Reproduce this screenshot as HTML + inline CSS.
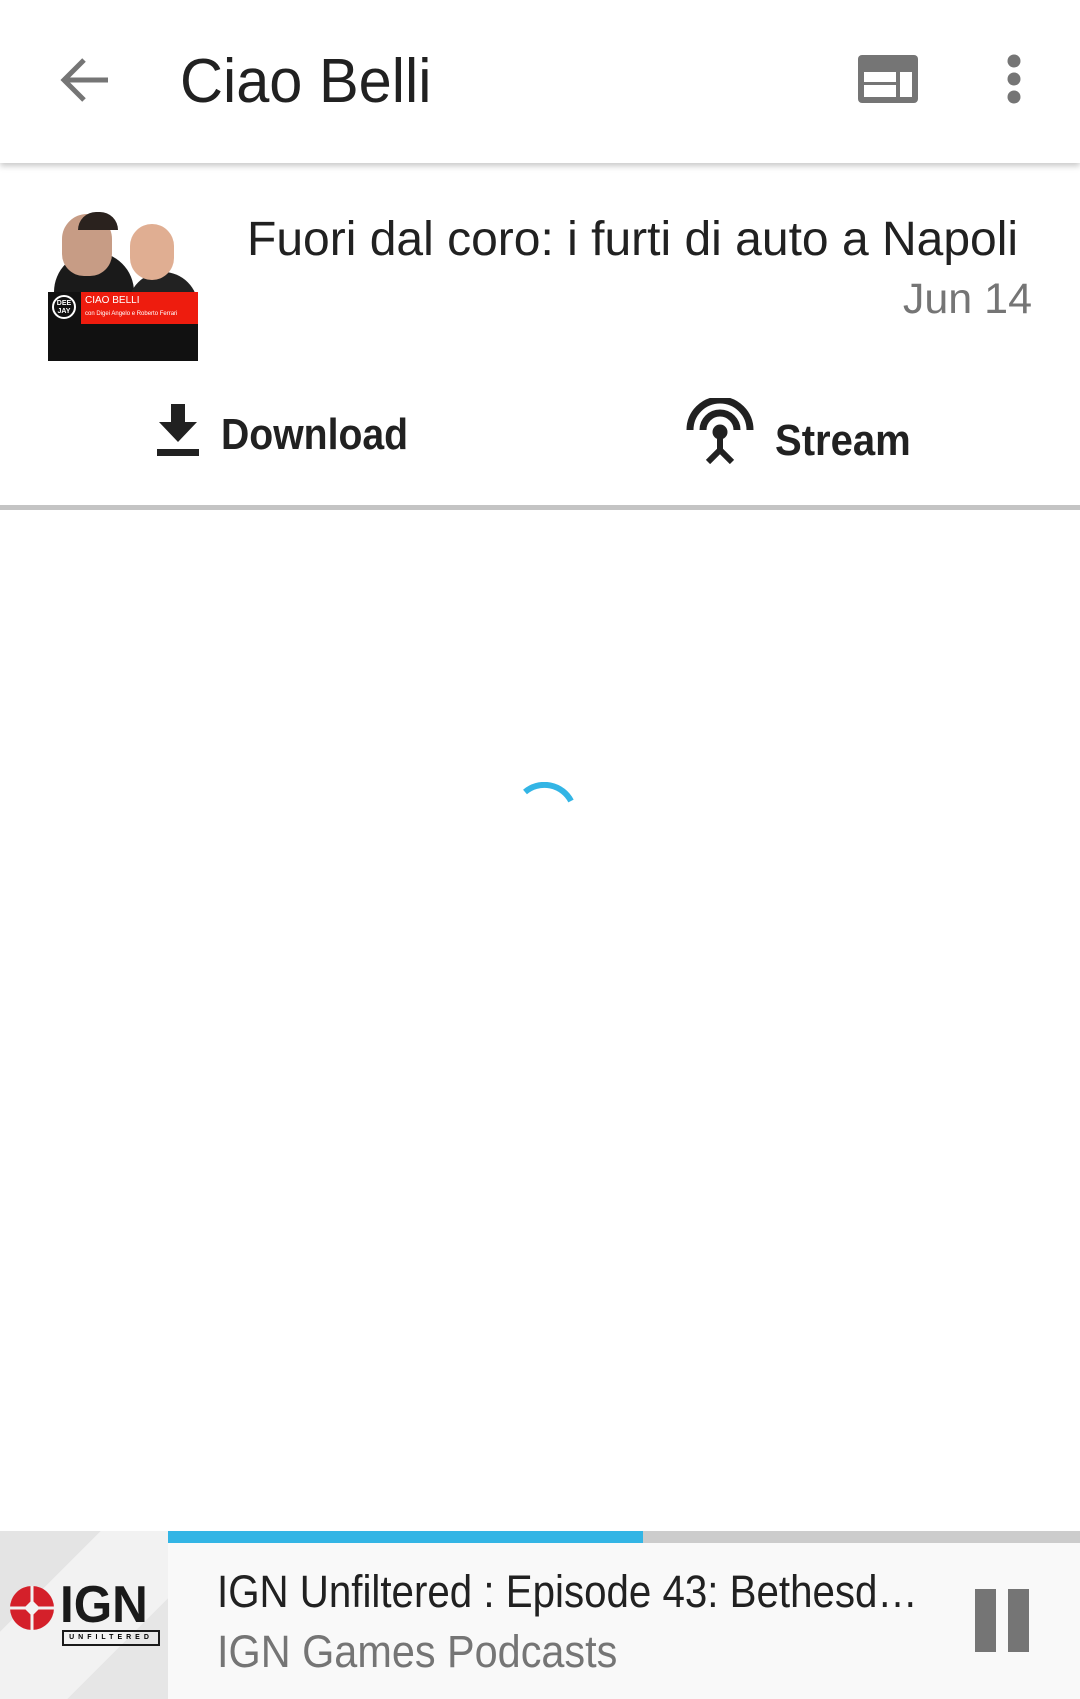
<!DOCTYPE html>
<html><head><meta charset="utf-8"><style>
*{margin:0;padding:0;box-sizing:border-box}
body{width:1080px;height:1699px;background:#fff;font-family:"Liberation Sans",Roboto,sans-serif;position:relative;overflow:hidden}
.abs{position:absolute}
.sx{transform-origin:0 0;white-space:nowrap}
#hdr{left:0;top:0;width:1080px;height:163px;background:#fff;box-shadow:0 3px 6px rgba(0,0,0,.22);z-index:2}
</style></head><body>
<div id="hdr" class="abs">
 <svg class="abs" style="left:56px;top:56px" width="56" height="48" viewBox="0 0 56 48"><path d="M52 24H8M28 4L8 24l20 20" stroke="#757575" stroke-width="5" fill="none"/></svg>
 <div class="abs sx" style="left:180px;top:46px;font-size:62px;color:#212121;transform:scaleX(0.96)">Ciao Belli</div>
 <svg class="abs" style="left:858px;top:55px" width="60" height="48" viewBox="0 0 60 48"><rect x="0" y="0" width="60" height="48" rx="4" fill="#757575"/><rect x="6" y="17" width="32" height="10" fill="#fff"/><rect x="6" y="30" width="32" height="12" fill="#fff"/><rect x="42" y="17" width="12" height="25" fill="#fff"/></svg>
 <svg class="abs" style="left:1004px;top:53px" width="20" height="52" viewBox="0 0 20 52"><circle cx="10" cy="8" r="6.5" fill="#757575"/><circle cx="10" cy="26" r="6.5" fill="#757575"/><circle cx="10" cy="44" r="6.5" fill="#757575"/></svg>
</div>
<div class="abs" style="left:48px;top:212px;width:150px;height:149px;background:#fff;overflow:hidden">
 <div class="abs" style="left:6px;top:40px;width:80px;height:80px;border-radius:40px 40px 0 0;background:#1a1a1a"></div>
 <div class="abs" style="left:80px;top:60px;width:70px;height:70px;border-radius:35px 35px 0 0;background:#222"></div>
 <div class="abs" style="left:14px;top:2px;width:50px;height:62px;border-radius:25px 25px 22px 22px;background:#c79c85"></div>
 <div class="abs" style="left:30px;top:0px;width:40px;height:18px;border-radius:20px 20px 0 0;background:#2a221e"></div>
 <div class="abs" style="left:82px;top:12px;width:44px;height:56px;border-radius:22px;background:#e0ae92"></div>
 <div class="abs" style="left:0;top:80px;width:150px;height:69px;background:#111"></div>
 <div class="abs" style="left:33px;top:80px;width:117px;height:32px;background:#ee1c0e;color:#fff;font-size:10px;padding:3px 4px;line-height:12px">CIAO BELLI<br><span style="font-size:6px">con Digei Angelo e Roberto Ferrari</span></div>
 <div class="abs" style="left:4px;top:83px;width:24px;height:24px;border:2px solid #fff;border-radius:50%;color:#fff;font-size:7px;text-align:center;line-height:8px;padding-top:3px;font-weight:bold">DEE<br>JAY</div>
</div>
<div class="abs sx" style="left:247px;top:212px;font-size:48px;color:#212121">Fuori dal coro: i furti di auto a Napoli</div>
<div class="abs" style="right:48px;top:275px;font-size:43px;color:#757575">Jun 14</div>
<svg class="abs" style="left:157px;top:404px" width="42" height="52" viewBox="0 0 42 52"><path d="M14 0h14v18h12L21 38 2 18h12z" fill="#212121"/><rect x="0" y="45" width="42" height="7" fill="#212121"/></svg>
<div class="abs sx" style="left:221px;top:410px;font-size:44px;font-weight:bold;color:#212121;transform:scaleX(0.89)">Download</div>
<svg class="abs" style="left:686px;top:398px" width="68" height="66" viewBox="0 0 68 66"><path d="M4 32a30 30 0 0 1 60 0" stroke="#212121" stroke-width="7" fill="none"/><path d="M17 32a17 17 0 0 1 34 0" stroke="#212121" stroke-width="7" fill="none"/><circle cx="34" cy="34" r="7.5" fill="#212121"/><path d="M34 38v14M22 64l12-12 12 12" stroke="#212121" stroke-width="6" fill="none"/></svg>
<div class="abs sx" style="left:775px;top:416px;font-size:44px;font-weight:bold;color:#212121;transform:scaleX(0.91)">Stream</div>
<div class="abs" style="left:0;top:505px;width:1080px;height:5px;background:#c4c4c4"></div>
<svg class="abs" style="left:520px;top:782px" width="64" height="40" viewBox="0 0 64 40"><path d="M5 10a30 30 0 0 1 46 9" stroke="#33b5e5" stroke-width="6" fill="none"/></svg>
<div class="abs" style="left:0;top:1531px;width:1080px;height:168px;background:#f9f9f9"></div>
<div class="abs" style="left:0;top:1531px;width:168px;height:168px;background:linear-gradient(135deg,#e4e4e4 0,#e4e4e4 30%,#f2f2f2 30%,#f2f2f2 70%,#e6e6e6 70%)"></div>
<svg class="abs" style="left:8px;top:1584px" width="48" height="48" viewBox="0 0 48 48"><circle cx="24" cy="24" r="22" fill="#d4202a"/><path d="M24 2v44M2 24h44" stroke="#f2f2f2" stroke-width="3"/><path d="M24 16l8 8-8 8-8-8z" fill="#f2f2f2"/></svg>
<div class="abs sx" style="left:60px;top:1580px;font-size:52px;font-weight:bold;color:#1a1a1a;line-height:50px;transform:scaleX(0.95)">IGN</div>
<div class="abs" style="left:62px;top:1630px;width:98px;height:16px;border:2px solid #1a1a1a;font-size:7px;letter-spacing:4px;text-align:center;line-height:12px;font-weight:bold">UNFILTERED</div>
<div class="abs" style="left:168px;top:1531px;width:475px;height:12px;background:#33b5e5"></div>
<div class="abs" style="left:643px;top:1531px;width:437px;height:12px;background:#cccccc"></div>
<div class="abs sx" style="left:217px;top:1566px;font-size:45px;color:#212121;transform:scaleX(0.895)">IGN Unfiltered : Episode 43: Bethesd…</div>
<div class="abs sx" style="left:217px;top:1626px;font-size:45px;color:#757575;transform:scaleX(0.92)">IGN Games Podcasts</div>
<div class="abs" style="left:975px;top:1589px;width:21px;height:63px;background:#757575"></div>
<div class="abs" style="left:1008px;top:1589px;width:21px;height:63px;background:#757575"></div>
</body></html>
